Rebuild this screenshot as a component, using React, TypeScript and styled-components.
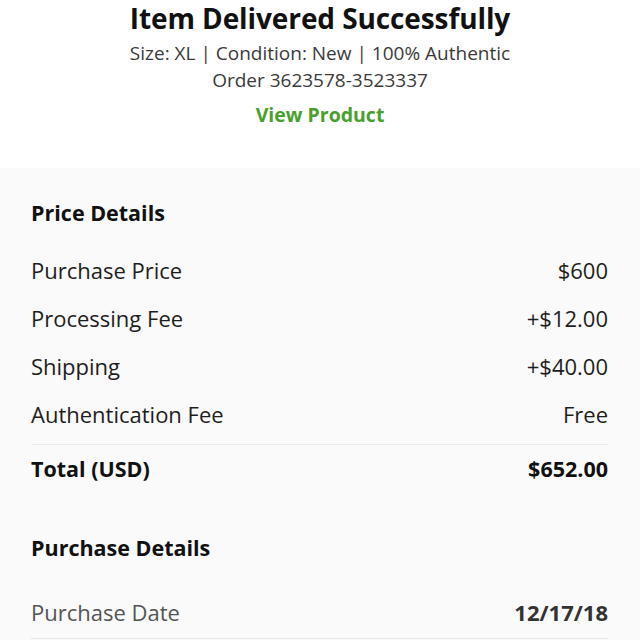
import styled, { createGlobalStyle } from "styled-components";

const GlobalStyle = createGlobalStyle`
  html, body {
    margin: 0;
    padding: 0;
    background: #ffffff;
  }
  body {
    font-family: "Open Sans", "Lato", sans-serif;
    -webkit-font-smoothing: antialiased;
  }
`;

type Row = { label: string; value: string };

const priceRows: Row[] = [
  { label: "Purchase Price", value: "$600" },
  { label: "Processing Fee", value: "+$12.00" },
  { label: "Shipping", value: "+$40.00" },
  { label: "Authentication Fee", value: "Free" },
];

export default function App() {
  return (
    <Page>
      <GlobalStyle />
      <Header>
        <Title>Item Delivered Successfully</Title>
        <Meta>Size: XL | Condition: New | 100% Authentic</Meta>
        <Meta>Order 3623578-3523337</Meta>
        <ViewLink>View Product</ViewLink>
      </Header>
      <Details>
        <SectionTitle>Price Details</SectionTitle>
        {priceRows.map((row) => (
          <LineRow key={row.label}>
            <span>{row.label}</span>
            <span>{row.value}</span>
          </LineRow>
        ))}
        <TotalRow>
          <span>Total (USD)</span>
          <span>$652.00</span>
        </TotalRow>
        <SectionTitle $spaced>Purchase Details</SectionTitle>
        <DateRow>
          <span>Purchase Date</span>
          <strong>12/17/18</strong>
        </DateRow>
      </Details>
    </Page>
  );
}

const Page = styled.div`
  width: 640px;
  height: 640px;
  overflow: hidden;
  display: flex;
  flex-direction: column;
`;

const Header = styled.div`
  height: 168px;
  flex-shrink: 0;
  display: flex;
  flex-direction: column;
  align-items: center;
  background: #ffffff;
`;

const Title = styled.h1`
  margin: 0 0 5px;
  padding-top: 1px;
  font-size: 28px;
  line-height: 34px;
  font-weight: 700;
  color: #111111;
  letter-spacing: -0.1px;
`;

const Meta = styled.div`
  font-size: 19px;
  line-height: 27px;
  color: #3a3a3a;
`;

const ViewLink = styled.a`
  margin-top: 8px;
  font-size: 19.5px;
  line-height: 26px;
  font-weight: 700;
  color: #4aa02c;
  cursor: pointer;
`;

const Details = styled.div`
  flex: 1;
  background: #fafafa;
  padding: 30px 32px 0 31px;
  display: flex;
  flex-direction: column;
`;

const SectionTitle = styled.h2<{ $spaced?: boolean }>`
  margin: ${(p) => (p.$spaced ? "42px" : "0")} 0 18px;
  font-size: 21.5px;
  line-height: 30px;
  font-weight: 700;
  color: #111111;
`;

const LineRow = styled.div`
  height: 48px;
  flex-shrink: 0;
  display: flex;
  justify-content: space-between;
  align-items: center;
  font-size: 22px;
  color: #1e1e1e;
`;

const TotalRow = styled(LineRow)`
  height: 46px;
  border-top: 1px solid #ebebeb;
  margin-top: 6px;
  font-weight: 700;
  font-size: 21.5px;
  color: #111111;
`;

const DateRow = styled(LineRow)`
  height: 52px;
  margin-top: 5px;
  color: #555555;
  border-bottom: 1px solid #e6e6e6;
  strong {
    color: #333333;
    font-weight: 700;
  }
`;
